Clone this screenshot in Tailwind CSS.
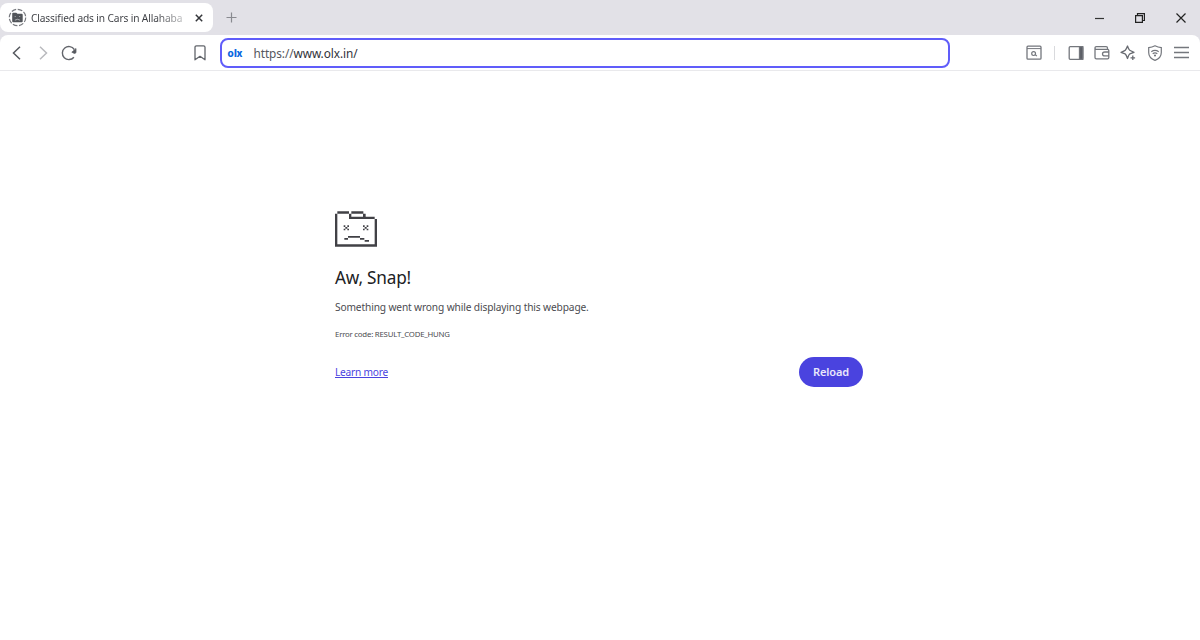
<!DOCTYPE html>
<html lang="en">
<head>
  <meta charset="UTF-8">
  <meta name="viewport" content="width=device-width, initial-scale=1.0">
  <title>Classified ads in Cars in Allahabad</title>
  <script src="https://cdn.jsdelivr.net/npm/@tailwindcss/browser@4"></script>
</head>
<body class="h-screen overflow-hidden bg-white font-['Noto_Sans','Open_Sans',sans-serif] text-[#3b3d42]">
  <div class="bg-[#e2e1e7]">
    <!-- Tab strip -->
    <div class="flex h-[35px] items-center">
      <div class="flex h-[29px] w-[213px] items-center rounded-lg bg-white pl-2">
        <svg class="size-[19px] shrink-0" viewBox="0 0 19 19" fill="none">
          <circle cx="9.5" cy="9.5" r="8.2" stroke="#77797e" stroke-width="1.2" stroke-dasharray="4.8 1.64"/>
          <path d="M4.200 5.800q0-1 1-1h3l1.300 1h4.200q1 0 1 1v6.400q0 1-1 1H5.200q-1 0-1-1z" fill="#515459"/>
          <path d="M6.700 8h1v.8h-1zM11.200 8h1v.8h-1z" fill="#c5c6c9"/>
          <path d="M6.900 12.200q2.600-1.800 5.200 0" stroke="#c5c6c9" stroke-width=".8"/>
        </svg>
        <div class="ml-1 w-[155px] whitespace-nowrap bg-linear-to-r from-[#3b3d42] from-80% to-[#3b3d42]/25 bg-clip-text text-[10.200px] leading-4 tracking-[-0.140px] text-transparent">Classified ads in Cars in Allahaba</div>
        <svg class="ml-[9px] size-2 shrink-0" viewBox="0 0 8 8" fill="none" stroke="#34363a" stroke-width="1.500"><path d="M.8.8l6.400 6.400M7.200.8L.8 7.200"/></svg>
      </div>
      <svg class="ml-[13px] size-[11px]" viewBox="0 0 11 11" fill="none" stroke="#898a90" stroke-width="1.200"><path d="M5.500.5v10M.5 5.500h10"/></svg>
      <!-- Window controls -->
      <div class="ml-auto flex items-center pr-3.5">
        <svg class="h-[10px] w-[9px]" viewBox="0 0 9 10" fill="none" stroke="#333" stroke-width="1.200"><path d="M0 5.500h9"/></svg>
        <svg class="ml-[31px] size-[10px]" viewBox="0 0 10 10" fill="none" stroke="#222" stroke-width="1.200"><path d="M.6 2.600h6.800v6.800H.6zM2.500 2.600V.6h6.900v6.900H7.400"/></svg>
        <svg class="ml-[31px] size-[10px]" viewBox="0 0 10 10" fill="none" stroke="#222" stroke-width="1.200"><path d="M.5.5l9 9M9.500.5l-9 9"/></svg>
      </div>
    </div>

    <!-- Toolbar -->
    <div class="flex h-9 items-center rounded-t-lg border-b border-[#e9e9ec] bg-white pl-3">
      <svg class="h-[14px] w-[9px]" viewBox="0 0 9 14" fill="none" stroke="#55585e" stroke-width="1.500"><path d="M8 .8L1.500 7 8 13.200"/></svg>
      <svg class="ml-[18px] h-[14px] w-[9px]" viewBox="0 0 9 14" fill="none" stroke="#b9babe" stroke-width="1.500"><path d="M1 .8L7.500 7 1 13.200"/></svg>
      <svg class="ml-[13px] size-4" viewBox="0 0 16 16" fill="none" stroke="#62656b" stroke-width="1.400"><path d="M12.900 12.200A6.500 6.500 0 1 1 13.300 4.500"/><path d="M15 3.500v4.200l-1.500.8-2.700-1.300z" fill="#55585e" stroke-width=".8" stroke-linejoin="round"/></svg>
      <svg class="ml-[117px] h-4 w-3" viewBox="0 0 12 16" fill="none" stroke="#62656b" stroke-width="1.300" stroke-linejoin="round"><path d="M1 2.300Q1 .8 2.500.8h7Q11 .8 11 2.300v12.500L6 11.300 1 14.800z"/></svg>

      <!-- Address bar -->
      <div class="ml-[13.500px] flex h-[30px] w-[730.500px] items-center rounded-lg border-2 border-[#605dfa] pl-[6px]">
        <div class="flex w-[26px] items-center font-['Inter'] text-[10px] leading-4 font-extrabold text-[#0b68df]"><span class="w-[6.500px]">o</span><span class="w-[2.500px]">l</span><span>x</span></div>
        <div class="pt-px text-[11.800px] leading-4 tracking-[-0.080px] text-[#303238]"><span class="text-[#55575d]">https://</span>www.olx.in/</div>
      </div>

      <div class="ml-auto flex items-center pr-[11px]">
        <svg class="size-4" viewBox="0 0 16 16" fill="none" stroke="#74777d" stroke-width="1.300"><rect x="1" y="1.200" width="14" height="13" rx="1"/><path d="M1 3.600h14" stroke-width="1"/><circle cx="7.600" cy="8.600" r="1.900" stroke-width="1.200"/><path d="M9.300 9.700l1.500 1.500" stroke-width="1.200"/></svg>
        <div class="ml-3 h-[14px] w-px bg-[#d9dadd]"></div>
        <svg class="ml-[13px] size-4" viewBox="0 0 16 16" fill="none" stroke="#74777d" stroke-width="1.300"><rect x="1.200" y="1.700" width="13.600" height="12.600" rx="1"/><path d="M11.500 1.700h3.300v12.600h-3.300z" fill="#5c5f66"/></svg>
        <svg class="ml-[10px] size-4" viewBox="0 0 16 16" fill="none" stroke="#74777d" stroke-width="1.300"><path d="M13.500 4.200V3q0-1.400-1.400-1.400H2.400Q1 1.600 1 3v9.500q0 1.400 1.400 1.400h11.200q1.200 0 1.200-1.400V5.600q0-1.300-1.300-1.300H2.500Q1 4.300 1 3"/><path d="M15 7h-4.200Q8.500 7 8.500 8.900t2.300 1.900H15"/></svg>
        <svg class="ml-[10px] size-4" viewBox="0 0 16 16" fill="none" stroke="#686b71" stroke-width="1.300" stroke-linejoin="round"><path d="M7.500 1Q8.700 4.700 9.700 5.300T14 7.300Q10.500 8.300 9.600 9.100T7.500 13.500Q6.200 9.900 5.300 9.100T1 7.300Q4.400 6.200 5.300 5.300T7.500 1z"/><path d="M12.500 9v6.500M10 12.500h6" stroke="#fff" stroke-width="3"/><path d="M12.800 10.500v4.600M10.500 12.800h4.600"/></svg>
        <svg class="ml-[11px] size-4" viewBox="0 0 16 16" fill="none" stroke="#74777d" stroke-width="1.200"><path d="M8 .8Q11 2.300 14.300 2.600V7.500Q14.300 13 8 15.400 1.700 13 1.700 7.500V2.600Q5 2.300 8 .8z"/><path d="M4.300 6.700Q8 4 11.700 6.700M5.700 8.700Q8 7.100 10.300 8.700"/><circle cx="8" cy="10.400" r="1" fill="#686b71" stroke="none"/></svg>
        <svg class="ml-[11px] h-[13px] w-[15px]" viewBox="0 0 15 13" fill="none" stroke="#74777d" stroke-width="1.300"><path d="M0 1.500h15M0 6.500h15M0 11.500h15"/></svg>
      </div>
    </div>
  </div>

  <!-- Crash page -->
  <main class="ml-[335px] w-[528px] pt-[140px]">
    <svg class="h-9 w-[42px]" viewBox="0 0 126 108" fill="#414146">
      <path d="M7 1h35v7H7zM49 1h36v7H49zM42 8h7v9h35V8h8v9h27v7H42zM0 8h7v92h112V24h7v83H0z"/>
      <path d="M26 43h5v5h-5zM37 43h5v5h-5zM31 48h6v5h-6zM26 53h5v5h-5zM37 53h5v5h-5zM84 43h5v5h-5zM95 43h5v5h-5zM89 48h6v5h-6zM84 53h5v5h-5zM95 53h5v5h-5z"/>
      <path d="M28 81h11v5H28zM39 75h36v5H39zM75 81h13v5H75zM89 87h13v5H89z"/>
    </svg>
    <h1 class="mt-[19px] text-[17.200px] leading-6 tracking-[-0.200px] text-[#202124]">Aw, Snap!</h1>
    <p class="mt-[9px] text-[10.200px] leading-4 tracking-[-0.140px] text-[#4b4b50]">Something went wrong while displaying this webpage.</p>
    <p class="mt-[13px] text-[7.800px] leading-3 tracking-[-0.210px] text-[#4b4b50]">Error code: RESULT_CODE_HUNG</p>
    <div class="mt-[17px] flex h-[30px] items-center justify-between">
      <a class="text-[10.200px] leading-4 tracking-[-0.240px] text-[#4a43df] underline" href="#">Learn more</a>
      <button class="h-[30px] w-16 rounded-full bg-[#4a43df] text-[11px] font-semibold tracking-[-0.100px] text-[#e9e8fb]">Reload</button>
    </div>
  </main>
</body>
</html>
